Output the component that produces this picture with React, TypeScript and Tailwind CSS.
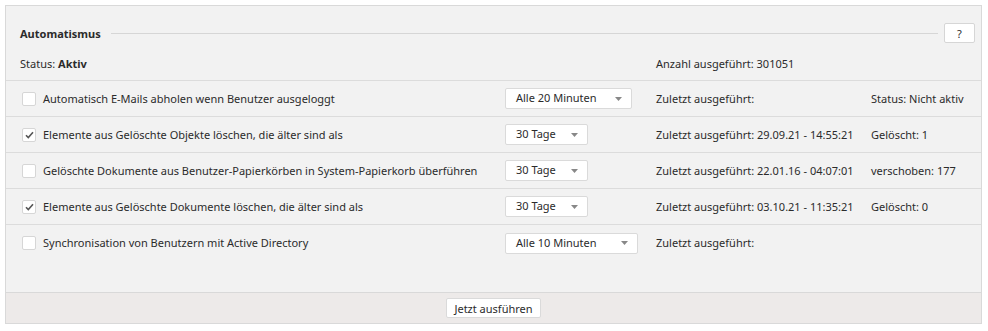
import React from "react";

type Row = {
  checked: boolean;
  label: string;
  interval: string;
  selectWidth: string;
  last: string;
  info?: string;
};

const rows: Row[] = [
  {
    checked: false,
    label: "Automatisch E-Mails abholen wenn Benutzer ausgeloggt",
    interval: "Alle 20 Minuten",
    selectWidth: "w-[127px]",
    last: "Zuletzt ausgeführt:",
    info: "Status: Nicht aktiv",
  },
  {
    checked: true,
    label: "Elemente aus Gelöschte Objekte löschen, die älter sind als",
    interval: "30 Tage",
    selectWidth: "w-[83px]",
    last: "Zuletzt ausgeführt: 29.09.21 - 14:55:21",
    info: "Gelöscht: 1",
  },
  {
    checked: false,
    label: "Gelöschte Dokumente aus Benutzer-Papierkörben in System-Papierkorb überführen",
    interval: "30 Tage",
    selectWidth: "w-[83px]",
    last: "Zuletzt ausgeführt: 22.01.16 - 04:07:01",
    info: "verschoben: 177",
  },
  {
    checked: true,
    label: "Elemente aus Gelöschte Dokumente löschen, die älter sind als",
    interval: "30 Tage",
    selectWidth: "w-[83px]",
    last: "Zuletzt ausgeführt: 03.10.21 - 11:35:21",
    info: "Gelöscht: 0",
  },
  {
    checked: false,
    label: "Synchronisation von Benutzern mit Active Directory",
    interval: "Alle 10 Minuten",
    selectWidth: "w-[133px]",
    last: "Zuletzt ausgeführt:",
  },
];

const Checkbox = ({ checked }: { checked: boolean }) => (
  <span className="w-[14px] h-[14px] bg-white border border-[#d6d6d6] rounded-[2px] flex items-center justify-center shrink-0">
    {checked && (
      <svg width="9" height="8" viewBox="0 0 9 8">
        <path d="M1 4.2 L3.3 6.5 L8 1.2" fill="none" stroke="#555" strokeWidth="1.6" />
      </svg>
    )}
  </span>
);

const Select = ({ value, width }: { value: string; width: string }) => (
  <div
    className={`${width} h-[21px] bg-white border border-[#dadada] rounded-[2px] flex items-center justify-between pl-[10px] pr-[9px]`}
  >
    <span>{value}</span>
    <svg width="7" height="4" viewBox="0 0 7 4">
      <path d="M0 0 H7 L3.5 4 Z" fill="#888" />
    </svg>
  </div>
);

export default function App() {
  return (
    <div
      className="w-[988px] h-[331px] bg-white pt-[5px] pl-[5px] text-[11px] text-[#2b2b2b] whitespace-nowrap"
      style={{ fontFamily: '"Noto Sans", "Open Sans", sans-serif' }}
    >
      <div className="w-[977px] h-[319px] bg-[#f2f2f2] border border-[#d9d9d9] flex flex-col">
        <div className="flex items-center h-[20px] mt-[17px] pl-[14px] pr-[6px]">
          <span className="font-bold mt-[3px]">Automatismus</span>
          <div className="flex-1 h-px bg-[#d6d6d6] ml-[10px] mr-[6px]" />
          <button className="w-[31px] h-[20px] bg-white border border-[#d6d6d6] rounded-[2px] text-[11px] leading-none">
            ?
          </button>
        </div>
        <div className="flex items-center h-[16px] mt-[13px] pl-[14px]">
          <span className="w-[636px]">
            Status: <span className="font-bold">Aktiv</span>
          </span>
          <span>Anzahl ausgeführt: 301051</span>
        </div>
        <div className="mt-[8px] border-t border-[#dcdcdc]">
          {rows.map((row, i) => (
            <div
              key={i}
              className={`h-[36px] flex items-center pl-[16px] ${
                i < rows.length - 1 ? "border-b border-[#dcdcdc]" : ""
              }`}
            >
              <div className="w-[483px] flex items-center gap-[7px]">
                <Checkbox checked={row.checked} />
                <span className="mt-px">{row.label}</span>
              </div>
              <div className="w-[151px]">
                <Select value={row.interval} width={row.selectWidth} />
              </div>
              <span className="w-[215px] mt-px">{row.last}</span>
              {row.info && <span className="mt-px">{row.info}</span>}
            </div>
          ))}
        </div>
        <div className="flex-1" />
        <div className="h-[31px] bg-[#edeae9] border-t border-[#d9d9d9] flex items-center justify-center">
          <button className="h-[20px] px-[7px] bg-white border border-[#dadada] rounded-[2px] text-[11px] leading-none">
            Jetzt ausführen
          </button>
        </div>
      </div>
    </div>
  );
}
